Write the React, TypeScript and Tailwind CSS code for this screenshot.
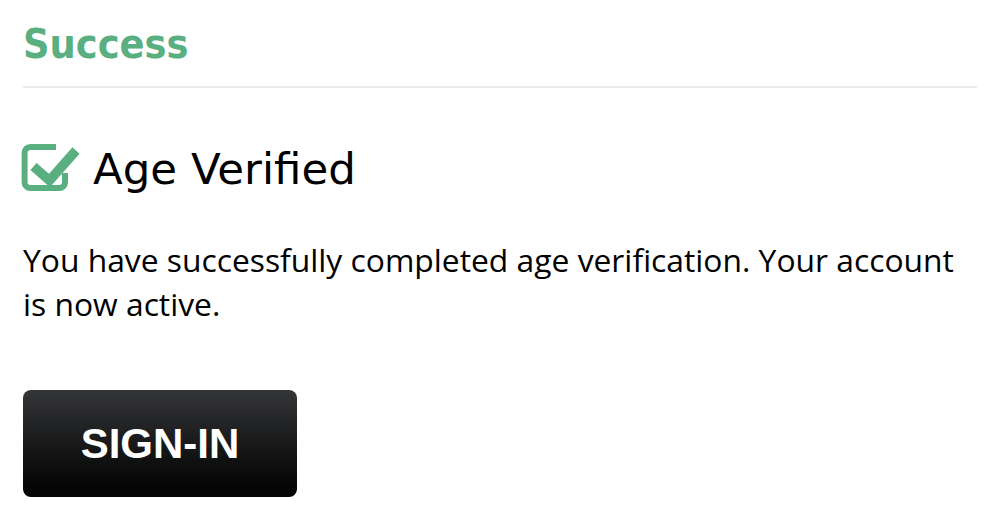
import React from "react";

function CheckSquare() {
  return (
    <svg width="60" height="50" viewBox="0 0 60 50" className="shrink-0">
      <path
        d="M36 5 H10.3 A5.7 5.7 0 0 0 4.6 10.7 V40.3 A5.7 5.7 0 0 0 10.3 46 H39.3 A5.7 5.7 0 0 0 45 40.3 V31"
        fill="none"
        stroke="#5aaf80"
        strokeWidth="6"
        strokeLinecap="butt"
      />
      <path
        d="M13.5 24.5 L29.5 38.5 L56 8.5"
        fill="none"
        stroke="#5aaf80"
        strokeWidth="9.5"
        strokeLinejoin="miter"
        strokeLinecap="butt"
      />
    </svg>
  );
}

export default function App() {
  return (
    <div className="w-[1000px] h-[530px] bg-white overflow-hidden px-[23px]">
      <div
        className="pt-[20px] h-[68px] text-[41px] leading-[48px] font-bold text-[#5aaf80]"
        style={{ fontFamily: '"DejaVu Sans Condensed", "DejaVu Sans", sans-serif', fontStretch: "condensed" }}
      >
        Success
      </div>
      <div className="mt-[18px] h-[2px] bg-[#ececec]" />
      <div className="mt-[54px] flex items-center gap-[13px] h-[50px] -ml-[3px]">
        <CheckSquare />
        <div
          className="text-[43.5px] leading-[48px] text-black pt-[3px]"
          style={{ fontFamily: '"DejaVu Sans", Verdana, sans-serif' }}
        >
          Age Verified
        </div>
      </div>
      <p
        className="mt-[46px] text-[31.8px] leading-[44px] text-black"
        style={{ fontFamily: '"Open Sans", "Noto Sans", sans-serif' }}
      >
        You have successfully completed age verification. Your account is now active.
      </p>
      <button
        className="mt-[64px] w-[274px] h-[107px] rounded-[8px] bg-gradient-to-b from-[#353638] to-[#030303] text-white text-[42px] font-bold flex items-center justify-center"
        style={{ fontFamily: '"Liberation Sans", Arial, sans-serif' }}
      >
        SIGN-IN
      </button>
    </div>
  );
}
